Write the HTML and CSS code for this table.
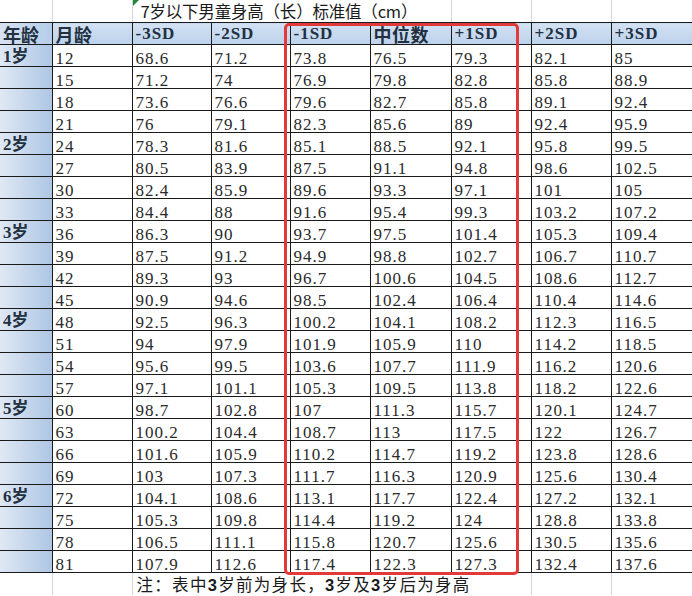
FILE: index.html
```html
<!DOCTYPE html>
<html lang="zh-CN">
<head>
<meta charset="utf-8">
<title>7岁以下男童身高（长）标准值</title>
<link rel="stylesheet" href="styles.css">
</head>
<body>
<div class="sheet">
<table class="grid">
  <colgroup>
    <col class="c-a"><col class="c-b"><col class="c-n1"><col class="c-n2"><col class="c-n3"><col class="c-n4"><col class="c-n5"><col class="c-n6"><col class="c-n7">
  </colgroup>
  <tr class="row-title">
    <td class="blank"></td>
    <td class="blank"></td>
    <td class="title" colspan="4"><span class="flag"></span><span class="title-text">7岁以下男童身高（长）标准值（cm）</span></td>
    <td class="blank"></td>
    <td class="blank"></td>
    <td class="blank last"></td>
  </tr>
  <tr class="row-head">
    <td class="age">年龄</td>
    <td class="hd">月龄</td>
    <td class="hd lat">-3SD</td>
    <td class="hd lat">-2SD</td>
    <td class="hd lat">-1SD</td>
    <td class="hd">中位数</td>
    <td class="hd lat">+1SD</td>
    <td class="hd lat">+2SD</td>
    <td class="hd lat">+3SD</td>
  </tr>
  <tr><td class="age">1岁</td><td>12</td><td>68.6</td><td>71.2</td><td>73.8</td><td>76.5</td><td>79.3</td><td>82.1</td><td>85</td></tr>
  <tr><td class="age"></td><td>15</td><td>71.2</td><td>74</td><td>76.9</td><td>79.8</td><td>82.8</td><td>85.8</td><td>88.9</td></tr>
  <tr><td class="age"></td><td>18</td><td>73.6</td><td>76.6</td><td>79.6</td><td>82.7</td><td>85.8</td><td>89.1</td><td>92.4</td></tr>
  <tr><td class="age"></td><td>21</td><td>76</td><td>79.1</td><td>82.3</td><td>85.6</td><td>89</td><td>92.4</td><td>95.9</td></tr>
  <tr><td class="age">2岁</td><td>24</td><td>78.3</td><td>81.6</td><td>85.1</td><td>88.5</td><td>92.1</td><td>95.8</td><td>99.5</td></tr>
  <tr><td class="age"></td><td>27</td><td>80.5</td><td>83.9</td><td>87.5</td><td>91.1</td><td>94.8</td><td>98.6</td><td>102.5</td></tr>
  <tr><td class="age"></td><td>30</td><td>82.4</td><td>85.9</td><td>89.6</td><td>93.3</td><td>97.1</td><td>101</td><td>105</td></tr>
  <tr><td class="age"></td><td>33</td><td>84.4</td><td>88</td><td>91.6</td><td>95.4</td><td>99.3</td><td>103.2</td><td>107.2</td></tr>
  <tr><td class="age">3岁</td><td>36</td><td>86.3</td><td>90</td><td>93.7</td><td>97.5</td><td>101.4</td><td>105.3</td><td>109.4</td></tr>
  <tr><td class="age"></td><td>39</td><td>87.5</td><td>91.2</td><td>94.9</td><td>98.8</td><td>102.7</td><td>106.7</td><td>110.7</td></tr>
  <tr><td class="age"></td><td>42</td><td>89.3</td><td>93</td><td>96.7</td><td>100.6</td><td>104.5</td><td>108.6</td><td>112.7</td></tr>
  <tr><td class="age"></td><td>45</td><td>90.9</td><td>94.6</td><td>98.5</td><td>102.4</td><td>106.4</td><td>110.4</td><td>114.6</td></tr>
  <tr><td class="age">4岁</td><td>48</td><td>92.5</td><td>96.3</td><td>100.2</td><td>104.1</td><td>108.2</td><td>112.3</td><td>116.5</td></tr>
  <tr><td class="age"></td><td>51</td><td>94</td><td>97.9</td><td>101.9</td><td>105.9</td><td>110</td><td>114.2</td><td>118.5</td></tr>
  <tr><td class="age"></td><td>54</td><td>95.6</td><td>99.5</td><td>103.6</td><td>107.7</td><td>111.9</td><td>116.2</td><td>120.6</td></tr>
  <tr><td class="age"></td><td>57</td><td>97.1</td><td>101.1</td><td>105.3</td><td>109.5</td><td>113.8</td><td>118.2</td><td>122.6</td></tr>
  <tr><td class="age">5岁</td><td>60</td><td>98.7</td><td>102.8</td><td>107</td><td>111.3</td><td>115.7</td><td>120.1</td><td>124.7</td></tr>
  <tr><td class="age"></td><td>63</td><td>100.2</td><td>104.4</td><td>108.7</td><td>113</td><td>117.5</td><td>122</td><td>126.7</td></tr>
  <tr><td class="age"></td><td>66</td><td>101.6</td><td>105.9</td><td>110.2</td><td>114.7</td><td>119.2</td><td>123.8</td><td>128.6</td></tr>
  <tr><td class="age"></td><td>69</td><td>103</td><td>107.3</td><td>111.7</td><td>116.3</td><td>120.9</td><td>125.6</td><td>130.4</td></tr>
  <tr><td class="age">6岁</td><td>72</td><td>104.1</td><td>108.6</td><td>113.1</td><td>117.7</td><td>122.4</td><td>127.2</td><td>132.1</td></tr>
  <tr><td class="age"></td><td>75</td><td>105.3</td><td>109.8</td><td>114.4</td><td>119.2</td><td>124</td><td>128.8</td><td>133.8</td></tr>
  <tr><td class="age"></td><td>78</td><td>106.5</td><td>111.1</td><td>115.8</td><td>120.7</td><td>125.6</td><td>130.5</td><td>135.6</td></tr>
  <tr><td class="age"></td><td>81</td><td>107.9</td><td>112.6</td><td>117.4</td><td>122.3</td><td>127.3</td><td>132.4</td><td>137.6</td></tr>
  <tr class="row-note">
    <td class="blank"></td>
    <td class="blank"></td>
    <td class="note" colspan="5">注：表中<b class="num">3</b>岁前为身长，<b class="num">3</b>岁及<b class="num">3</b>岁后为身高</td>
    <td class="blank"></td>
    <td class="blank last"></td>
  </tr>
</table>
<div class="highlight"></div>
</div>
</body>
</html>
```

FILE: styles.css
```css
html, body {
  margin: 0;
  padding: 0;
  background: #ffffff;
}

.sheet {
  position: relative;
  width: 692px;
  height: 596px;
  overflow: hidden;
}

.grid {
  border-collapse: collapse;
  table-layout: fixed;
  width: 692px;
  font-family: "Liberation Serif", "Noto Sans CJK SC", serif;
  font-size: 17px;
  letter-spacing: 1px;
  color: #2a2a2a;
}

.c-a { width: 52px; }
.c-b { width: 80px; }
.c-n1 { width: 79px; }
.c-n2 { width: 79px; }
.c-n3 { width: 80px; }
.c-n4 { width: 81px; }
.c-n5 { width: 80px; }
.c-n6 { width: 80px; }
.c-n7 { width: 81px; }

.grid tr { height: 22px; }

.grid td {
  padding: 0 0 0 3px;
  border: 1px solid #1a1a1a;
  vertical-align: bottom;
  line-height: 14px;
  white-space: nowrap;
}

.grid td:first-child { border-left: none; }

/* title row */
.row-title td {
  border-top: none;
  border-left: none;
  border-right: 1px solid #d6d6d6;
  border-bottom: 1px solid #1a1a1a;
}
.row-title td.last { border-right: none; }

.title {
  position: relative;
  padding-left: 8px !important;
  font-family: "Noto Sans CJK SC", sans-serif;
  font-size: 16.5px;
  letter-spacing: -0.2px;
  color: #1a1a1a;
  vertical-align: top !important;
  line-height: 21px !important;
}

.title-text {
  display: inline-block;
  padding-top: 1px;
}

.flag {
  position: absolute;
  left: 0;
  top: 0;
  width: 0;
  height: 0;
  border-top: 6px solid #1e8a3a;
  border-right: 6px solid transparent;
}

/* header row */
.row-head td {
  background: linear-gradient(to bottom, #d3e1f3, #bcd2ec);
  color: #22303f;
  font-weight: bold;
  vertical-align: middle;
  line-height: 20px;
}

.row-head .hd {
  font-family: "Noto Sans CJK SC", sans-serif;
  font-size: 18px;
  letter-spacing: 0.5px;
}

.row-head .lat {
  font-family: "Liberation Serif", serif;
  font-size: 17px;
  letter-spacing: 1px;
}

/* age column */
.grid td.age {
  background: linear-gradient(to right, #dfe8f4, #aec6e4);
  color: #22303f;
  font-weight: bold;
  font-size: 17px;
  letter-spacing: 0;
  vertical-align: middle;
  line-height: 18px;
  padding-top: 3px;
}

.row-head td.age {
  font-family: "Noto Sans CJK SC", sans-serif;
  font-size: 18px;
  padding-top: 0;
  background: linear-gradient(to right, #d6e2f2, #b6cde8);
}

/* note row */
.row-note td {
  border-left: none;
  border-bottom: none;
  border-right: 1px solid #d6d6d6;
  border-top: 1px solid #1a1a1a;
}
.row-note td.last { border-right: none; }

.note {
  padding-left: 4px !important;
  padding-top: 1px !important;
  font-family: "Noto Sans CJK SC", sans-serif;
  font-size: 16.5px;
  letter-spacing: 1.3px;
  color: #1a1a1a;
  vertical-align: top !important;
  line-height: 20px !important;
}

.note .num {
  font-family: "Liberation Sans", sans-serif;
  font-weight: bold;
}

/* red emphasis frame over the -1SD .. +1SD columns */
.highlight {
  position: absolute;
  left: 284px;
  top: 23px;
  width: 229px;
  height: 546px;
  border: 3px solid #e23a3a;
  border-radius: 5px;
  pointer-events: none;
}
```
